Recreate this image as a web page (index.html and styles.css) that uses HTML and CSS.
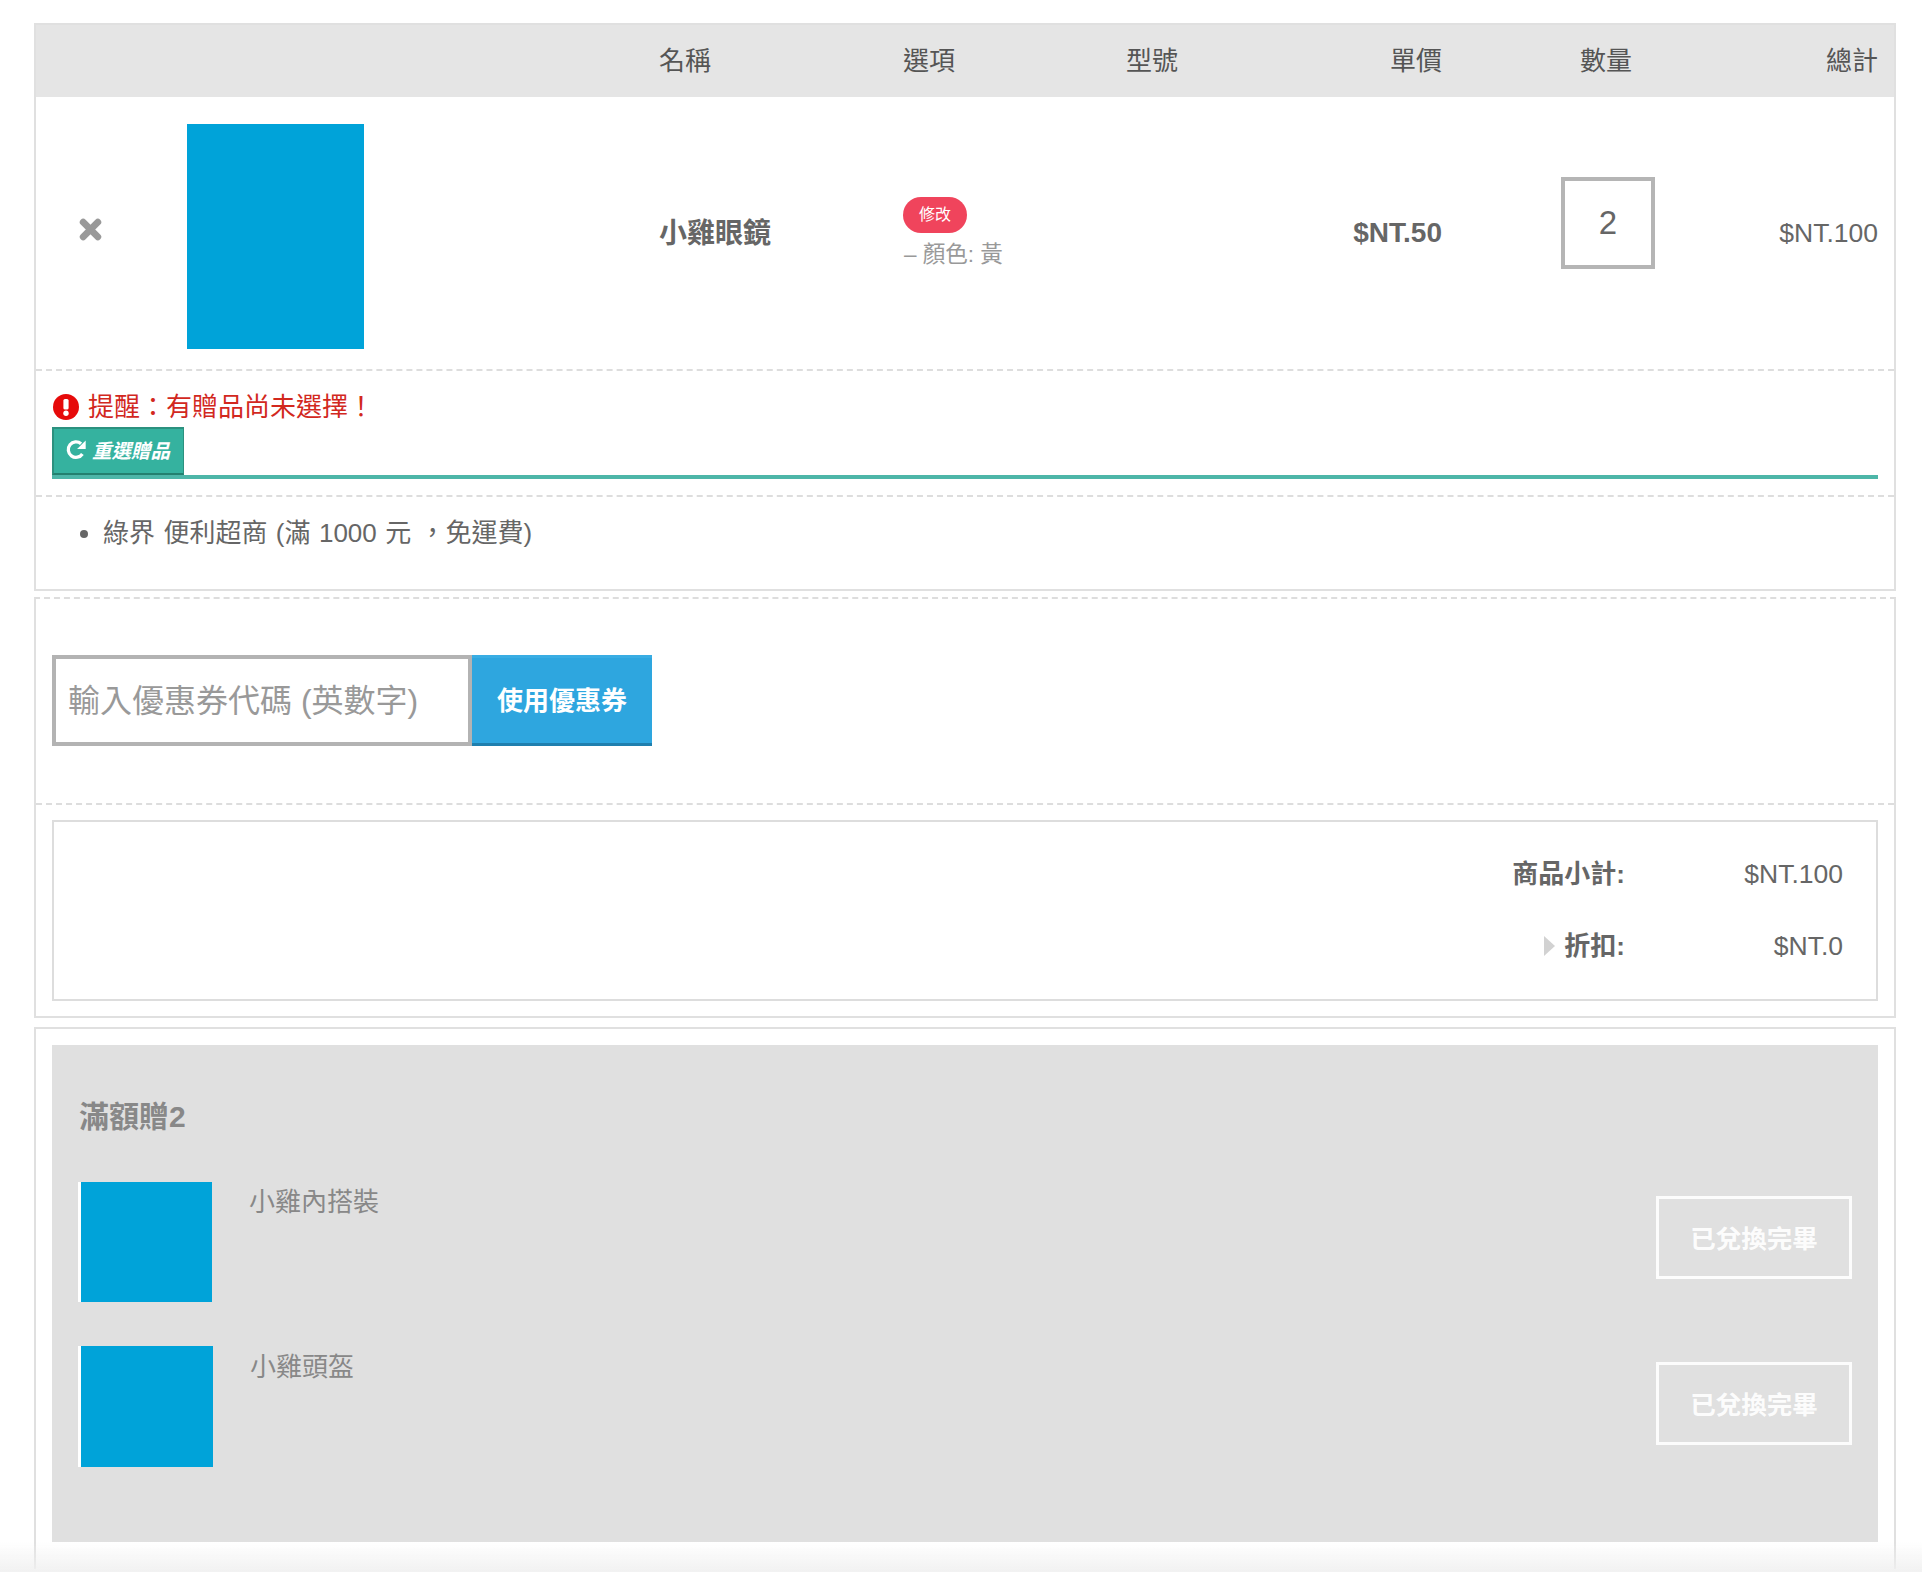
FILE: index.html
```html
<!DOCTYPE html>
<html lang="zh-Hant">
<head>
<meta charset="utf-8">
<title>購物車</title>
<link rel="stylesheet" href="styles.css">
</head>
<body>
<main class="page">
  <section class="panel panel-cart">
    <div class="cart-grid cart-head">
      <span></span>
      <span></span>
      <span>名稱</span>
      <span>選項</span>
      <span>型號</span>
      <span class="right">單價</span>
      <span class="head-qty">數量</span>
      <span class="right">總計</span>
    </div>
    <div class="cart-grid cart-row">
      <span class="remove">
        <svg width="23" height="23" viewBox="0 0 22 22"><path d="M4 4 L18 18 M18 4 L4 18" stroke="#999" stroke-width="6.5" stroke-linecap="round"/></svg>
      </span>
      <div class="product-image"></div>
      <strong class="product-name">小雞眼鏡</strong>
      <div class="options">
        <span class="badge">修改</span>
        <span class="option-text">– 顏色: 黃</span>
      </div>
      <span></span>
      <strong class="right price">$NT.50</strong>
      <div class="qty-cell"><input class="qty" type="text" value="2"></div>
      <span class="right total">$NT.100</span>
    </div>
    <div class="gift-alert">
      <p class="alert-line">
        <svg class="alert-icon" width="26" height="26" viewBox="0 0 26 26"><circle cx="13" cy="13" r="13" fill="#e60a0a"/><rect x="10.4" y="5" width="5.2" height="10.5" rx="1.6" fill="#fff"/><circle cx="13" cy="19.3" r="2.7" fill="#fff"/></svg>
        提醒：有贈品尚未選擇！
      </p>
      <div class="reselect-bar">
        <button class="reselect" type="button">
          <svg width="22" height="22" viewBox="0 0 20 20"><path d="M15.8 13.6 A7 7 0 1 1 14.6 4.4" fill="none" stroke="#fff" stroke-width="3"/><path d="M18.8 1.4 V9.2 H11 Z" fill="#fff"/></svg>
          <em>重選贈品</em>
        </button>
      </div>
    </div>
    <ul class="shipping">
      <li>綠界 便利超商 (滿 1000 元 ，免運費)</li>
    </ul>
  </section>

  <section class="panel panel-coupon">
    <form class="coupon">
      <input class="coupon-input" type="text" placeholder="輸入優惠券代碼 (英數字)">
      <button class="coupon-button" type="button">使用優惠券</button>
    </form>
    <div class="summary-wrap">
      <div class="summary">
        <strong>商品小計:</strong><span class="summary-value">$NT.100</span>
        <strong class="discount"><i class="triangle"></i>折扣:</strong><span class="summary-value">$NT.0</span>
      </div>
    </div>
  </section>

  <section class="panel panel-gifts">
    <div class="gift-box">
      <h2 class="gift-title">滿額贈2</h2>
      <div class="gift-item">
        <div class="gift-image"></div>
        <span class="gift-name">小雞內搭裝</span>
        <button class="gift-done" type="button">已兌換完畢</button>
      </div>
      <div class="gift-item gift-item-second">
        <div class="gift-image"></div>
        <span class="gift-name">小雞頭盔</span>
        <button class="gift-done" type="button">已兌換完畢</button>
      </div>
    </div>
  </section>
</main>
<div class="bottom-fade"></div>
</body>
</html>
```

FILE: styles.css
```css
* { box-sizing: border-box; }

html, body {
  margin: 0;
  height: 100%;
  overflow: hidden;
  background: #fff;
}

body {
  font-family: "Liberation Sans", "Noto Sans CJK TC", sans-serif;
  font-size: 26px;
  line-height: 40px;
  color: #666;
}

.page {
  padding: 23px 26px 0 34px;
}

.panel {
  border: 2px solid #e0e0e0;
}

/* Cart table */
.cart-grid {
  display: grid;
  grid-template-columns: 151px 472px 244px 223px 174px 142px 213px 223px;
  padding-right: 16px;
}

.right { text-align: right; }

.cart-head {
  height: 72px;
  align-items: center;
  background: #e5e5e5;
  color: #555;
}

.head-qty { padding-left: 138px; }

.cart-row {
  padding-top: 27px;
  padding-bottom: 20px;
  align-items: center;
  border-bottom: 2px dashed #ddd;
  height: 274px;
}

.remove {
  display: flex;
  padding-left: 43px;
  margin-top: -14px;
}

.product-image {
  width: 177px;
  height: 225px;
  background: #00a3d9;
}

.product-name {
  font-size: 28px;
  margin-top: -6px;
}

.cart-row .price {
  font-size: 28px;
  margin-top: -8px;
}

.cart-row .total {
  font-size: 26.5px;
  margin-top: -8px;
}

.options {
  display: flex;
  flex-direction: column;
  align-items: flex-start;
  margin-top: -6px;
}

.badge {
  width: 64px;
  height: 36px;
  border-radius: 18px;
  background: #f0445c;
  color: #fff;
  font-size: 16px;
  line-height: 36px;
  text-align: center;
}

.option-text {
  margin-top: 6px;
  padding-left: 1px;
  font-size: 22.5px;
  line-height: 32px;
  color: #999;
}

.qty-cell {
  align-self: start;
  margin-top: 53px;
  padding-left: 119px;
}

.qty {
  display: block;
  width: 94px;
  height: 92px;
  padding: 0;
  border: 4px solid #b5b5b5;
  border-radius: 0;
  background: #fff;
  font: 33px "Liberation Sans", sans-serif;
  color: #666;
  text-align: center;
}

/* Gift alert */
.gift-alert {
  padding: 19px 16px 16px;
  border-bottom: 2px dashed #ddd;
}

.alert-line {
  display: flex;
  align-items: center;
  gap: 9px;
  height: 34px;
  margin: 0 0 3px;
  padding-left: 1px;
  font-size: 26px;
  line-height: 34px;
  color: #d2281e;
}

.alert-icon { flex: none; }

.reselect-bar {
  border-bottom: 4px solid #4db6a8;
}

.reselect {
  display: flex;
  align-items: center;
  gap: 5px;
  width: 132px;
  height: 48px;
  padding: 0 0 3px 11px;
  border: 0;
  border-top: 2px solid #2c917f;
  border-left: 2px solid #2c917f;
  border-bottom: 2px solid #23806f;
  border-right: 1px solid #2c917f;
  background: #35b29f;
  color: #fff;
  font-family: "Liberation Sans", "Noto Sans CJK TC", sans-serif;
  font-size: 19.5px;
  font-weight: 700;
}

.reselect em { font-style: italic; }

.shipping {
  margin: 0;
  height: 92px;
  padding: 16px 0 0 67px;
  word-spacing: 1.2px;
}

/* Coupon */
.panel-coupon {
  margin-top: 6px;
  border-top-style: dashed;
  border-top-color: #ddd;
}

.coupon {
  display: flex;
  padding: 56px 16px 57px;
  border-bottom: 2px dashed #ddd;
}

.coupon-input {
  width: 420px;
  height: 91px;
  padding: 2px 12px 0;
  border: 4px solid #b3b3b3;
  border-radius: 0;
  outline: 0;
  background: #fff;
  font: 32px "Liberation Sans", "Noto Sans CJK TC", sans-serif;
}

.coupon-input::placeholder { color: #999; opacity: 1; }

.coupon-button {
  width: 180px;
  height: 91px;
  padding: 0 0 4px;
  border: 0;
  border-top: 3px solid #39ade3;
  border-bottom: 3px solid #1f7fae;
  background: #2ea6df;
  color: #fff;
  font-family: "Liberation Sans", "Noto Sans CJK TC", sans-serif;
  font-size: 26px;
  font-weight: 700;
}

/* Summary */
.summary-wrap {
  padding: 15px 16px;
}

.summary {
  display: grid;
  grid-template-columns: 1fr 218px;
  align-content: start;
  row-gap: 32px;
  height: 181px;
  padding: 32px 33px 0 0;
  border: 2px solid #ddd;
  text-align: right;
}

.summary-value { font-size: 26.5px; }

.discount {
  display: flex;
  align-items: center;
  justify-content: flex-end;
  gap: 9px;
}

.triangle {
  width: 0;
  height: 0;
  border-left: 11px solid #d2d2d2;
  border-top: 10px solid transparent;
  border-bottom: 10px solid transparent;
}

/* Gifts */
.panel-gifts {
  margin-top: 9px;
  padding: 16px 16px 27px;
  border-bottom: 0;
}

.gift-box {
  padding: 52px 26px 75px 26px;
  background: #e0e0e0;
  color: #888;
}

.gift-title {
  margin: 0 0 45px 1px;
  font-size: 30px;
  line-height: 40px;
  font-weight: 700;
}

.gift-item {
  display: flex;
  align-items: flex-start;
  height: 120px;
  margin-bottom: 44px;
}

.gift-item-second {
  height: 121px;
  margin-bottom: 0;
}

.gift-image {
  flex: none;
  width: 134px;
  height: 100%;
  border-left: 3px solid #fff;
  background: #00a3d9;
}

.gift-item-second .gift-image { width: 135px; }

.gift-name {
  flex: 1;
  padding-left: 37px;
}

.gift-item-second .gift-name { padding-top: 1px; }

.gift-done {
  flex: none;
  width: 196px;
  height: 83px;
  margin-top: 14px;
  padding: 0 0 3px;
  border: 3px solid #fff;
  border-radius: 0;
  background: transparent;
  color: #fff;
  font-family: "Liberation Sans", "Noto Sans CJK TC", sans-serif;
  font-size: 25.5px;
  font-weight: 700;
  opacity: .92;
}

.gift-item-second .gift-done { margin-top: 16px; }

.bottom-fade {
  position: fixed;
  left: 0;
  right: 0;
  bottom: 0;
  height: 30px;
  background: linear-gradient(rgba(242,242,242,0), rgba(240,240,240,.9));
  pointer-events: none;
}
```
